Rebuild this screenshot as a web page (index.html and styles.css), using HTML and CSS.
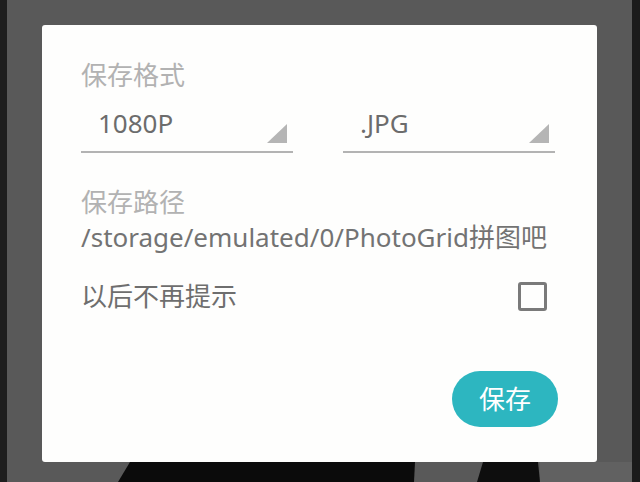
FILE: index.html
```html
<!DOCTYPE html>
<html lang="zh-CN">
<head>
<meta charset="utf-8">
<title>保存</title>
<link rel="stylesheet" href="styles.css">
</head>
<body>
<svg class="backdrop" width="640" height="482" viewBox="0 0 640 482" aria-hidden="true">
  <rect x="0" y="0" width="640" height="482" fill="#595959"/>
  <rect x="0" y="0" width="7" height="482" fill="#1e1e1e"/>
  <rect x="632" y="0" width="8" height="482" fill="#1b1b1b"/>
  <rect x="540" y="462" width="92" height="20" fill="#616161"/>
  <polygon points="130,462 415,462 414,482 118,482" fill="#0b0b0b"/>
  <polygon points="483,462 538,462 540,482 477,482" fill="#0e0e0e"/>
</svg>
<div class="dialog">
  <div class="label">保存格式</div>
  <div class="spinners">
    <div class="spinner">
      <span class="value">1080P</span>
      <svg class="arrow" width="20" height="19" viewBox="0 0 20 19"><polygon points="20,0 20,19 0,19" fill="#b5b5b5"/></svg>
    </div>
    <div class="spinner">
      <span class="value">.JPG</span>
      <svg class="arrow" width="20" height="19" viewBox="0 0 20 19"><polygon points="20,0 20,19 0,19" fill="#b5b5b5"/></svg>
    </div>
  </div>
  <div class="label label-path">保存路径</div>
  <div class="path">/storage/emulated/0/PhotoGrid拼图吧</div>
  <div class="check-row">
    <span class="check-text">以后不再提示</span>
    <span class="checkbox"></span>
  </div>
  <div class="actions">
    <button class="save-btn">保存</button>
  </div>
</div>
</body>
</html>
```
FILE: styles.css
```css
html, body {
  margin: 0;
  padding: 0;
}
body {
  width: 640px;
  height: 482px;
  overflow: hidden;
  position: relative;
  font-family: "Noto Sans", "Noto Sans CJK SC", sans-serif;
  font-size: 26px;
  line-height: 31px;
  padding: 25px 0 0 42px;
  box-sizing: border-box;
}
.backdrop {
  position: absolute;
  left: 0;
  top: 0;
  z-index: 0;
}
.dialog {
  position: relative;
  z-index: 1;
  width: 555px;
  height: 437px;
  box-sizing: border-box;
  background: #fefefd;
  border-radius: 3px;
  padding: 35px 39px 0 39px;
  display: flex;
  flex-direction: column;
}
.label {
  color: #b2b2b2;
}
.spinners {
  display: grid;
  grid-template-columns: 212px 212px;
  column-gap: 50px;
  margin-top: 17px;
}
.spinner {
  display: flex;
  justify-content: space-between;
  align-items: flex-end;
  padding: 0 6px 8px 17px;
  border-bottom: 2px solid #b3b3b3;
}
.value {
  color: #6c6c6c;
  margin-bottom: 4px;
}
.arrow {
  display: block;
}
.label-path {
  margin-top: 34px;
}
.path {
  color: #737373;
  margin-top: 4px;
}
.check-row {
  display: flex;
  justify-content: space-between;
  align-items: flex-start;
  margin-top: 28px;
}
.check-text {
  color: #6e6e6e;
}
.checkbox {
  width: 29px;
  height: 29px;
  box-sizing: border-box;
  border: 3px solid #7a7a7a;
  border-radius: 3px;
  margin: 1px 11px 0 0;
}
.actions {
  display: flex;
  justify-content: flex-end;
  margin-top: 59px;
}
.save-btn {
  width: 106px;
  height: 56px;
  border: none;
  border-radius: 28px;
  background: #2db6c0;
  color: #ffffff;
  font-family: "Noto Sans", "Noto Sans CJK SC", sans-serif;
  font-size: 26px;
  line-height: 31px;
  padding: 0;
}
```
